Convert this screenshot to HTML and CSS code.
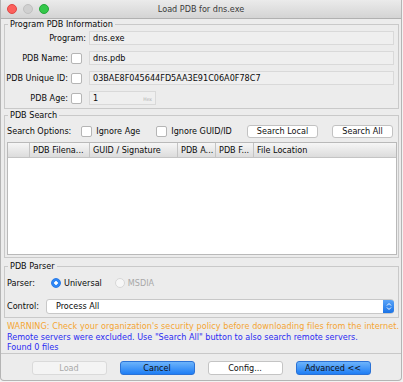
FILE: index.html
```html
<!DOCTYPE html>
<html>
<head>
  <title>Load PDB for dns.exe</title>
  <meta charset="UTF-8">
  <link rel="stylesheet" href="styles.css">
</head>
<body>
  <div class="window">
    <div class="titlebar">
      <span class="light red"></span>
      <span class="light off"></span>
      <span class="light green"></span>
      <span class="title">Load PDB for dns.exe</span>
    </div>

    <div class="content">
      <fieldset class="panel info">
        <legend>Program PDB Information</legend>
        <div class="row">
          <div class="lbl">Program:</div>
          <div class="field">dns.exe</div>
        </div>
        <div class="row">
          <div class="lbl">PDB Name: <span class="check"></span></div>
          <div class="field">dns.pdb</div>
        </div>
        <div class="row">
          <div class="lbl">PDB Unique ID: <span class="check"></span></div>
          <div class="field">03BAE8F045644FD5AA3E91C06A0F78C7</div>
        </div>
        <div class="row">
          <div class="lbl">PDB Age: <span class="check"></span></div>
          <div class="field age">1<span class="hex">Hex</span></div>
        </div>
      </fieldset>

      <fieldset class="panel search">
        <legend>PDB Search</legend>
        <div class="search-row">
          <span>Search Options:</span>
          <span class="check opt1"></span><span class="opt-text">Ignore Age</span>
          <span class="check opt2"></span><span class="opt-text">Ignore GUID/ID</span>
          <button class="btn local">Search Local</button>
          <button class="btn all">Search All</button>
        </div>
        <div class="table">
          <div class="thead">
            <div class="th c0"></div>
            <div class="th c1">PDB Filena...</div>
            <div class="th c2">GUID / Signature</div>
            <div class="th c3">PDB A...</div>
            <div class="th c4">PDB F...</div>
            <div class="th c5">File Location</div>
          </div>
        </div>
      </fieldset>

      <fieldset class="panel parser">
        <legend>PDB Parser</legend>
        <div class="parser-row">
          <span class="plbl">Parser:</span>
          <span class="radio on"></span><span class="rtext">Universal</span>
          <span class="radio dis"></span><span class="rtext dis">MSDIA</span>
        </div>
        <div class="control-row">
          <span class="clbl">Control:</span>
          <div class="select">
            <span>Process All</span>
            <span class="stepper">
              <svg width="6" height="9" viewBox="0 0 6 9"><path d="M1 3.5 L3 1.5 L5 3.5 M1 5.5 L3 7.5 L5 5.5" fill="none" stroke="#fff" stroke-width="1"/></svg>
            </span>
          </div>
        </div>
      </fieldset>

      <div class="messages">
        <div class="warn">WARNING: Check your organization's security policy before downloading files from the internet.</div>
        <div class="info-msg">Remote servers were excluded. Use "Search All" button to also search remote servers.</div>
        <div class="info-msg">Found 0 files</div>
      </div>
    </div>

    <div class="footer">
      <button class="fbtn disabled">Load</button>
      <button class="fbtn blue">Cancel</button>
      <button class="fbtn">Config...</button>
      <button class="fbtn blue">Advanced &lt;&lt;</button>
    </div>
  </div>
</body>
</html>
```

FILE: styles.css
```css
body {
  margin: 0;
  background: #f2f2f2;
  font-family: "DejaVu Sans Condensed", "Liberation Sans", sans-serif;
  font-size: 9px;
  color: #0a0a0a;
}
.window {
  width: 400px;
  height: 380px;
  background: #ececec;
  border: 1px solid #b4b4b4;
  border-top: none;
  border-radius: 0 0 4px 4px;
}
.titlebar {
  height: 18px;
  position: relative;
  display: flex;
  align-items: center;
  padding-left: 6px;
  background: linear-gradient(#ebebeb, #d4d4d4);
  border-bottom: 1px solid #b1b1b1;
}
.light {
  width: 8px;
  height: 8px;
  border-radius: 50%;
  margin-right: 6px;
}
.light.red { background: #fc605c; border: 0.5px solid #df4744; }
.light.off { background: #d0d0d0; border: 0.5px solid #c0c0c0; }
.light.green { background: #34c84a; border: 0.5px solid #24a63a; }
.title {
  position: absolute;
  left: 0;
  right: 0;
  text-align: center;
  font-size: 9px;
  color: #3a3a3a;
}
.content {
  padding: 0 2px 0 3px;
  height: 334px;
  border-bottom: 1px solid #c8c8c8;
}
.panel {
  margin: 0;
  padding: 2px 1px 3px 2px;
  border: 1px solid #c9c9c9;
  min-inline-size: 0;
}
.panel legend {
  padding: 0 2px;
  margin-left: 1px;
  line-height: 10px;
  font-size: 9px;
}
.panel.search { margin-top: 1px; padding-bottom: 2px; }
.panel.parser { margin-top: 3px; padding-top: 5px; padding-bottom: 4px; }

.row {
  display: flex;
  align-items: center;
  height: 14px;
  margin-bottom: 6px;
}
.row:last-child { margin-bottom: 0; }
.lbl {
  width: 79px;
  flex: none;
  display: flex;
  justify-content: flex-end;
  align-items: center;
  white-space: nowrap;
}
.check {
  display: inline-block;
  flex: none;
  width: 9px;
  height: 9px;
  background: #fff;
  border: 1px solid #b5b5b5;
  border-radius: 2px;
  margin-left: 3px;
  margin-right: 4px;
}
.field {
  flex: 1;
  height: 12px;
  line-height: 12px;
  margin-left: 3px;
  margin-right: 3px;
  padding-left: 3px;
  background: #efefef;
  border: 1px solid #d9d9d9;
}
.field.age {
  flex: none;
  width: 62px;
  position: relative;
}
.hex {
  position: absolute;
  right: 3px;
  bottom: -1px;
  font-size: 5px;
  color: #b0b0b0;
}

.search-row {
  display: flex;
  align-items: center;
  height: 14px;
  margin-top: 2px;
}
.search-row .check { margin: 0 4px 0 10px; }
.search-row .opt2 { margin-left: 16px; }
.btn {
  height: 13px;
  padding: 0;
  font-family: inherit;
  font-size: 9px;
  color: #111;
  background: #fff;
  border: 1px solid #c2c2c2;
  border-radius: 3px;
}
.btn.local { width: 71px; margin-left: auto; }
.btn.all { width: 61px; margin-left: 14px; margin-right: 4px; }

.table {
  margin-top: 4px;
  height: 111px;
  background: #fff;
  border: 1px solid #b9b9b9;
}
.thead {
  display: flex;
  height: 14px;
  background: linear-gradient(#f6f6f6, #dcdcdc);
  border-bottom: 1px solid #c4c4c4;
}
.th {
  line-height: 14px;
  padding-left: 3px;
  border-right: 1px solid #c4c4c4;
  white-space: nowrap;
  overflow: hidden;
}
.th.c0 { width: 18px; }
.th.c1 { width: 56px; }
.th.c2 { width: 84px; }
.th.c3 { width: 34px; }
.th.c4 { width: 34px; }
.th.c5 { flex: 1; border-right: none; }

.parser-row, .control-row {
  display: flex;
  align-items: center;
  height: 14px;
}
.control-row { margin-top: 9px; }
.plbl { width: 44px; }
.clbl { width: 39px; }
.radio {
  width: 10px;
  height: 10px;
  border-radius: 50%;
  box-sizing: border-box;
  margin-right: 3px;
}
.radio.on {
  background: radial-gradient(circle, #fff 0 1.5px, #2f87f5 2px);
  border: 1px solid #2a7be8;
}
.radio.dis {
  margin-left: 13px;
  background: #f7f7f7;
  border: 1px solid #d7d7d7;
}
.rtext.dis { color: #a8a8a8; }
.select {
  flex: 1;
  display: flex;
  align-items: center;
  height: 13px;
  margin-right: 3px;
  padding-left: 9px;
  background: #fff;
  border: 1px solid #c8c8c8;
  border-radius: 3px;
}
.select span:first-child { flex: 1; }
.stepper {
  display: flex;
  align-items: center;
  justify-content: center;
  width: 11px;
  height: 13px;
  margin-right: -1px;
  background: linear-gradient(#5aa4f8, #1b73e6);
  border-radius: 0 3px 3px 0;
}

.messages {
  margin-top: 3px;
  padding-left: 3px;
  line-height: 10.5px;
  white-space: nowrap;
}
.warn { color: #f4a532; letter-spacing: 0.05px; }
.info-msg { color: #2b2bf2; }

.footer {
  display: flex;
  justify-content: center;
  gap: 13px;
  padding-top: 7px;
}
.fbtn {
  width: 75px;
  height: 14px;
  padding: 0;
  font-family: inherit;
  font-size: 9px;
  color: #111;
  background: #fff;
  border: 1px solid #c4c4c4;
  border-radius: 3px;
}
.fbtn.blue {
  background: linear-gradient(#6db4fb, #1f7ef5);
  border-color: #2b72d6;
}
.fbtn.disabled {
  background: #f4f4f4;
  border-color: #dadada;
  color: #a9a9a9;
}
```
